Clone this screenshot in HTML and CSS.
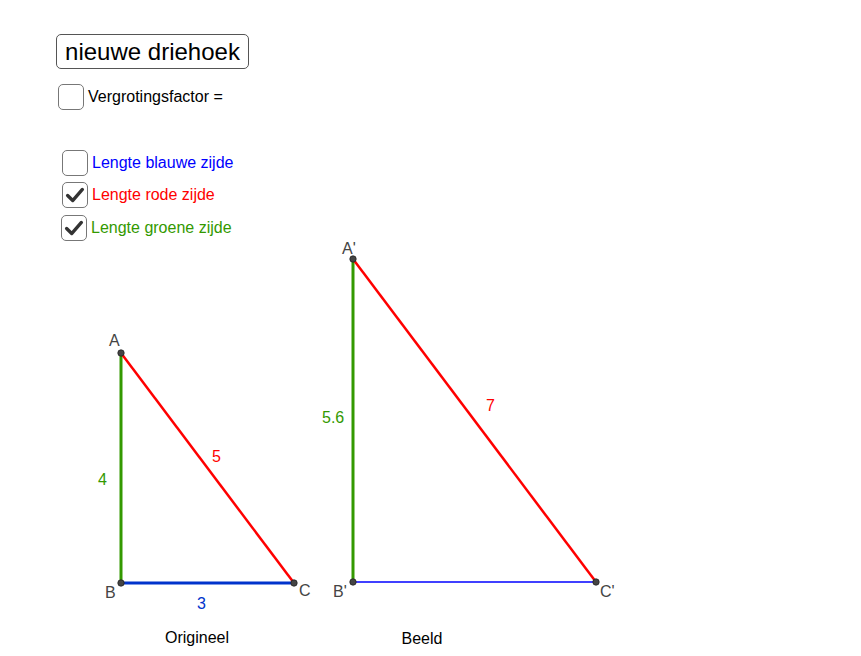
FILE: index.html
```html
<!DOCTYPE html>
<html>
<head>
<meta charset="utf-8">
<link rel="stylesheet" href="styles.css">
</head>
<body>
<div class="applet">
  <svg class="canvas" width="861" height="656" viewBox="0 0 861 656">
    <g class="orig">
      <line x1="121" y1="353" x2="121" y2="583" stroke="#339900" stroke-width="3"/>
      <line x1="121" y1="353" x2="294" y2="583" stroke="#ff0000" stroke-width="2.5"/>
      <line x1="121" y1="583" x2="294" y2="583" stroke="#0033cc" stroke-width="3"/>
      <circle cx="121" cy="353" r="3.2" fill="#444" stroke="#222" stroke-width="0.8"/>
      <circle cx="121" cy="583" r="3.2" fill="#444" stroke="#222" stroke-width="0.8"/>
      <circle cx="294" cy="583" r="3.2" fill="#444" stroke="#222" stroke-width="0.8"/>
    </g>
    <g class="beeld">
      <line x1="353" y1="259" x2="353" y2="582" stroke="#339900" stroke-width="3"/>
      <line x1="353" y1="259" x2="596" y2="582" stroke="#ff0000" stroke-width="2.5"/>
      <line x1="353" y1="582" x2="596" y2="582" stroke="#0000ff" stroke-width="1.5"/>
      <circle cx="353" cy="259" r="3.2" fill="#444" stroke="#222" stroke-width="0.8"/>
      <circle cx="353" cy="582" r="3.2" fill="#444" stroke="#222" stroke-width="0.8"/>
      <circle cx="596" cy="582" r="3.2" fill="#444" stroke="#222" stroke-width="0.8"/>
    </g>
    <g class="pt">
      <text x="109" y="346">A</text>
      <text x="105" y="598">B</text>
      <text x="299" y="596">C</text>
      <text x="342" y="254">A'</text>
      <text x="333" y="597">B'</text>
      <text x="600" y="597">C'</text>
    </g>
    <g class="val">
      <text x="98" y="485" fill="#339900">4</text>
      <text x="212" y="462" fill="#ff0000">5</text>
      <text x="197" y="609" fill="#0033cc">3</text>
      <text x="322" y="423" fill="#339900">5.6</text>
      <text x="486" y="411" fill="#ff0000">7</text>
    </g>
    <g class="cap">
      <text x="197" y="643" text-anchor="middle">Origineel</text>
      <text x="422" y="644" text-anchor="middle">Beeld</text>
    </g>
  </svg>

  <div class="controls">
    <button class="btn">nieuwe driehoek</button>
    <label class="row row-factor"><span class="box"></span><span class="lbl black">Vergrotingsfactor =</span></label>
    <label class="row row-blue"><span class="box"></span><span class="lbl blue">Lengte blauwe zijde</span></label>
    <label class="row row-red"><span class="box"><svg class="tick" viewBox="0 0 26 26"><path d="M5 13.5 L10.5 19 L21 7" fill="none" stroke="#333" stroke-width="3.6" stroke-linecap="round" stroke-linejoin="round"/></svg></span><span class="lbl red">Lengte rode zijde</span></label>
    <label class="row row-green"><span class="box"><svg class="tick" viewBox="0 0 26 26"><path d="M5 13.5 L10.5 19 L21 7" fill="none" stroke="#333" stroke-width="3.6" stroke-linecap="round" stroke-linejoin="round"/></svg></span><span class="lbl green">Lengte groene zijde</span></label>
  </div>
</div>
</body>
</html>
```
FILE: styles.css
```css
html, body {
  margin: 0;
  padding: 0;
  background: #ffffff;
}
.applet {
  position: relative;
  width: 861px;
  height: 656px;
  overflow: hidden;
  font-family: "Liberation Sans", Arial, sans-serif;
}
.canvas {
  position: absolute;
  left: 0;
  top: 0;
}
.pt text {
  font-family: "Liberation Sans", Arial, sans-serif;
  font-size: 16px;
  fill: #444444;
}
.val text {
  font-family: "Liberation Sans", Arial, sans-serif;
  font-size: 16px;
}
.cap text {
  font-family: "Liberation Sans", Arial, sans-serif;
  font-size: 16px;
  fill: #000;
}
.controls {
  position: relative;
  display: flex;
  flex-direction: column;
  align-items: flex-start;
  padding-top: 34px;
}
.btn {
  margin-left: 56px;
  height: 35px;
  width: 193px;
  padding: 0;
  box-sizing: border-box;
  border: 1px solid #555;
  border-radius: 5px;
  background: #fff;
  font-family: "Liberation Sans", Arial, sans-serif;
  font-size: 24px;
  color: #000;
  line-height: 33px;
}
.row {
  display: flex;
  align-items: center;
  gap: 4px;
}
.box {
  width: 26px;
  height: 26px;
  box-sizing: border-box;
  border: 1.5px solid #777;
  border-radius: 5px;
  background: #fff;
  display: flex;
  align-items: center;
  justify-content: center;
}
.tick {
  width: 24px;
  height: 24px;
}
.lbl {
  font-size: 16px;
}
.row-factor { margin-left: 58px; margin-top: 15px; }
.row-blue { margin-left: 62px; margin-top: 40px; }
.row-red { margin-left: 62px; margin-top: 6px; }
.row-green { margin-left: 61px; margin-top: 7px; }
.black { color: #000; }
.blue { color: #0000ff; }
.red { color: #ff0000; }
.green { color: #339900; }
```
